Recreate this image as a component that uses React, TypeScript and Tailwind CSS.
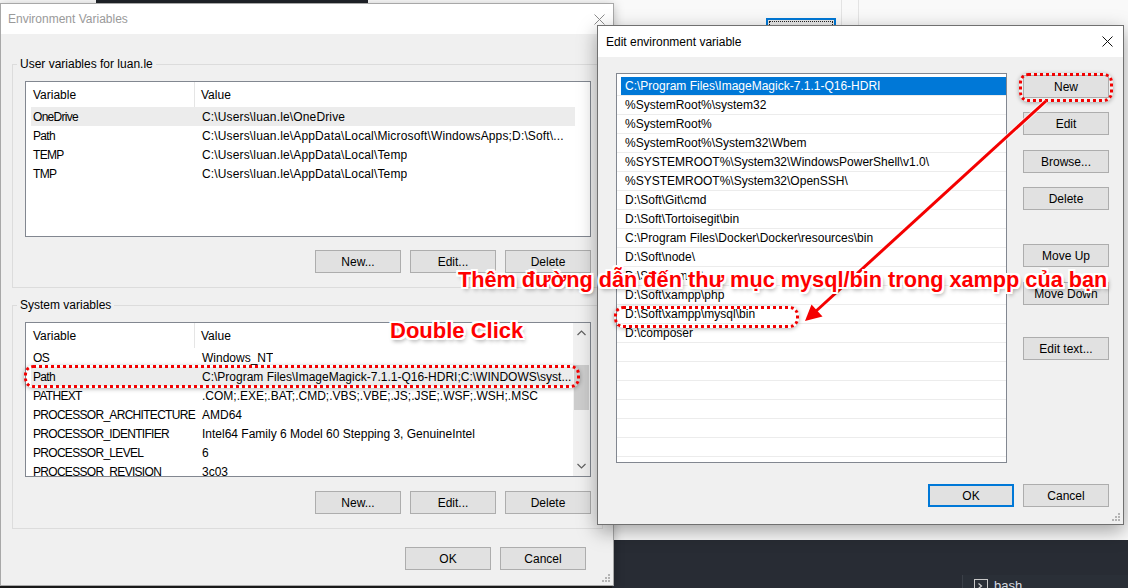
import React from "react";

const F = "font-['Liberation_Sans',Arial,sans-serif]";

function Btn({ children, primary = false }: { children: React.ReactNode; primary?: boolean }) {
  return (
    <div
      className={
        primary
          ? "h-[23px] w-[86px] shrink-0 flex items-center justify-center bg-[#e1e1e1] border-2 border-[#0078d7] text-[12px] leading-none text-black"
          : "h-[23px] w-[86px] shrink-0 flex items-center justify-center bg-[#e1e1e1] border border-[#adadad] text-[12px] leading-none text-black"
      }
    >
      {children}
    </div>
  );
}

function CloseX({ color }: { color: string }) {
  return (
    <svg width="11" height="11" viewBox="0 0 11 11" className="shrink-0">
      <path d="M0.5 0.5L10.5 10.5M10.5 0.5L0.5 10.5" stroke={color} strokeWidth="1" />
    </svg>
  );
}

function Grip() {
  return (
    <svg width="8" height="8" viewBox="0 0 8 8" fill="#b4b4b4">
      <rect x="6" y="0" width="2" height="2" />
      <rect x="3" y="3" width="2" height="2" />
      <rect x="6" y="3" width="2" height="2" />
      <rect x="0" y="6" width="2" height="2" />
      <rect x="3" y="6" width="2" height="2" />
      <rect x="6" y="6" width="2" height="2" />
    </svg>
  );
}

function Scrollbar() {
  return (
    <div className="w-[17px] h-full shrink-0 bg-[#f0f0f0] flex flex-col items-center">
      <div className="h-[20px] w-full flex items-center justify-center">
        <svg width="9" height="6" viewBox="0 0 9 6">
          <path d="M0.5 5L4.5 1L8.5 5" stroke="#606060" strokeWidth="1.2" fill="none" />
        </svg>
      </div>
      <div className="h-[22px]" />
      <div className="w-[15px] h-[45px] bg-[#cdcdcd]" />
      <div className="flex-1" />
      <div className="h-[20px] w-full flex items-center justify-center">
        <svg width="9" height="6" viewBox="0 0 9 6">
          <path d="M0.5 1L4.5 5L8.5 1" stroke="#606060" strokeWidth="1.2" fill="none" />
        </svg>
      </div>
    </div>
  );
}

function VarList({
  rows,
  sel,
  scroll,
  className,
}: {
  rows: [string, string][];
  sel: number;
  scroll: boolean;
  className: string;
}) {
  return (
    <div className={`flex bg-white border border-[#828790] overflow-hidden ${className}`}>
      <div className="flex-1 min-w-0 pl-[5px] overflow-hidden">
        <div className="flex h-[25px] w-[544px] items-stretch text-[12px] text-black">
          <div className="w-[164px] shrink-0 flex items-center pl-[2px] border-r border-[#e5e5e5]">Variable</div>
          <div className="flex items-center pl-[6px]">Value</div>
        </div>
        {rows.map(([a, b], i) => (
          <div
            key={i}
            className={
              i === sel
                ? "flex h-[19px] w-[544px] items-center text-[12px] text-black whitespace-nowrap bg-[#ececec]"
                : "flex h-[19px] w-[544px] items-center text-[12px] text-black whitespace-nowrap"
            }
          >
            <div className="w-[165px] shrink-0 pl-[2px] overflow-hidden tracking-[-0.7px]">{a}</div>
            <div className={scroll ? "pl-[6px] overflow-hidden" : "pl-[6px] overflow-hidden tracking-[0.15px]"}>{b}</div>
          </div>
        ))}
      </div>
      {scroll && <Scrollbar />}
    </div>
  );
}

const userRows: [string, string][] = [
  ["OneDrive", "C:\\Users\\luan.le\\OneDrive"],
  ["Path", "C:\\Users\\luan.le\\AppData\\Local\\Microsoft\\WindowsApps;D:\\Soft\\..."],
  ["TEMP", "C:\\Users\\luan.le\\AppData\\Local\\Temp"],
  ["TMP", "C:\\Users\\luan.le\\AppData\\Local\\Temp"],
];

const sysRows: [string, string][] = [
  ["OS", "Windows_NT"],
  ["Path", "C:\\Program Files\\ImageMagick-7.1.1-Q16-HDRI;C:\\WINDOWS\\syst..."],
  ["PATHEXT", ".COM;.EXE;.BAT;.CMD;.VBS;.VBE;.JS;.JSE;.WSF;.WSH;.MSC"],
  ["PROCESSOR_ARCHITECTURE", "AMD64"],
  ["PROCESSOR_IDENTIFIER", "Intel64 Family 6 Model 60 Stepping 3, GenuineIntel"],
  ["PROCESSOR_LEVEL", "6"],
  ["PROCESSOR_REVISION", "3c03"],
];

const paths: string[] = [
  "C:\\Program Files\\ImageMagick-7.1.1-Q16-HDRI",
  "%SystemRoot%\\system32",
  "%SystemRoot%",
  "%SystemRoot%\\System32\\Wbem",
  "%SYSTEMROOT%\\System32\\WindowsPowerShell\\v1.0\\",
  "%SYSTEMROOT%\\System32\\OpenSSH\\",
  "D:\\Soft\\Git\\cmd",
  "D:\\Soft\\Tortoisegit\\bin",
  "C:\\Program Files\\Docker\\Docker\\resources\\bin",
  "D:\\Soft\\node\\",
  "D:\\Soft\\xampp\\",
  "D:\\Soft\\xampp\\php",
  "D:\\Soft\\xampp\\mysql\\bin",
  "D:\\composer",
  "",
  "",
  "",
  "",
  "",
  "",
  "",
];

const annot =
  "font-['Liberation_Sans',Arial,sans-serif] font-bold text-[#fe0000] whitespace-nowrap leading-[22px] [text-shadow:-2px_-2px_0_#fff,2px_-2px_0_#fff,-2px_2px_0_#fff,2px_2px_0_#fff,0_-2px_0_#fff,0_2px_0_#fff,-2px_0_0_#fff,2px_0_0_#fff,2px_3px_4px_rgba(0,0,0,0.45)]";

export default function App() {
  return (
    <div className={`relative w-[1128px] h-[588px] overflow-hidden bg-[#f9f9f9] ${F}`}>
      {/* desktop background bits */}
      <div className="absolute left-[96px] top-0 w-[272px] h-[4px] bg-[#1f2329]" />
      <div className="absolute left-[841px] top-0 w-px h-[30px] bg-[#e3e3e3]" />
      <div className="absolute left-[858px] top-0 w-px h-[30px] bg-[#e3e3e3]" />
      <div className="absolute left-[766px] top-[18px] w-[70px] h-[12px] border-2 border-[#0078d7] bg-[#e8e8e8] p-px">
        <div className="h-full border border-dotted border-[#222]" />
      </div>
      <div className="absolute left-0 top-[584px] w-[620px] h-[4px] bg-[#1e1e1e]" />
      <div className="absolute left-[612px] top-[540px] w-[516px] h-[48px] bg-[#282c34]">
        <div className="flex pt-[35px] pl-[350px] h-full">
          <div className="border-l border-[#3b4048] pl-[11px] flex items-start gap-[6px] flex-1 bg-[#2a2f37]">
            <div className="mt-[4px] w-[14px] h-[14px] border border-[#c8c8c8] flex items-center justify-center">
              <svg width="8" height="8" viewBox="0 0 8 8">
                <path d="M1.5 1.5L4.5 4L1.5 6.5" stroke="#d0d0d0" strokeWidth="1.2" fill="none" />
              </svg>
            </div>
            <span className="text-[13px] leading-[16px] mt-[3px] text-[#d7dae0]">bash</span>
          </div>
        </div>
      </div>

      {/* Environment Variables window */}
      <div className="absolute left-0 top-[3px] w-[614px] h-[583px] flex flex-col bg-[#f0f0f0] border border-[#a8a8a8] shadow-[0_2px_10px_rgba(0,0,0,0.25)]">
        <div className="h-[30px] shrink-0 bg-white flex items-center justify-between pl-[7px] pr-[8px]">
          <span className="text-[12px] text-[#9a9a9a]">Environment Variables</span>
          <CloseX color="#8c8c8c" />
        </div>
        <div className="pl-[11px] pt-[23px]">
          <fieldset className="w-[591px] border border-[#dcdcdc] pb-[14px]">
            <legend className="ml-[4px] px-[3px] text-[12px] leading-[15px] text-black">User variables for luan.le</legend>
            <div className="pl-[12px] pr-[11px]">
              <VarList rows={userRows} sel={0} scroll={false} className="mt-[9px] w-[566px] h-[156px]" />
              <div className="mt-[13px] flex justify-end gap-[9px]">
                <Btn>New...</Btn>
                <Btn>Edit...</Btn>
                <Btn>Delete</Btn>
              </div>
            </div>
          </fieldset>
          <fieldset className="mt-[10px] w-[591px] border border-[#dcdcdc] pb-[14px]">
            <legend className="ml-[4px] px-[3px] text-[12px] leading-[15px] text-black">System variables</legend>
            <div className="pl-[12px] pr-[11px]">
              <VarList rows={sysRows} sel={1} scroll={true} className="mt-[9px] w-[566px] h-[155px]" />
              <div className="mt-[14px] flex justify-end gap-[9px]">
                <Btn>New...</Btn>
                <Btn>Edit...</Btn>
                <Btn>Delete</Btn>
              </div>
            </div>
          </fieldset>
          <div className="mt-[18px] flex justify-end gap-[9px] pr-[27px]">
            <Btn>OK</Btn>
            <Btn>Cancel</Btn>
          </div>
        </div>
        <div className="absolute right-[3px] bottom-[3px]">
          <Grip />
        </div>
      </div>

      {/* Edit environment variable window */}
      <div className="absolute left-[597px] top-[25px] w-[527px] h-[500px] flex flex-col bg-[#f0f0f0] border border-[#707070] shadow-[0_6px_18px_rgba(0,0,0,0.35)]">
        <div className="h-[31px] shrink-0 bg-white flex items-center justify-between pl-[8px] pr-[10px]">
          <span className="text-[12px] text-black">Edit environment variable</span>
          <CloseX color="#111" />
        </div>
        <div className="flex pl-[18px] pt-[16px]">
          <div className="w-[391px] h-[390px] shrink-0 bg-white border border-[#828790] pt-[3px] overflow-hidden">
            {paths.map((p, i) => (
              <div key={i} className="h-[19px] border-b border-[#ececec] flex">
                <div
                  className={
                    i === 0
                      ? "ml-[4px] flex-1 pl-[4px] flex items-center text-[12px] whitespace-nowrap bg-[#0078d7] text-white"
                      : "ml-[4px] flex-1 pl-[4px] flex items-center text-[12px] whitespace-nowrap text-black"
                  }
                >
                  {p}
                </div>
              </div>
            ))}
          </div>
          <div className="ml-[16px] flex flex-col">
            <div className="mt-[2px]"><Btn>New</Btn></div>
            <div className="mt-[14px]"><Btn>Edit</Btn></div>
            <div className="mt-[15px]"><Btn>Browse...</Btn></div>
            <div className="mt-[14px]"><Btn>Delete</Btn></div>
            <div className="mt-[34px]"><Btn>Move Up</Btn></div>
            <div className="mt-[15px]"><Btn>Move Down</Btn></div>
            <div className="mt-[32px]"><Btn>Edit text...</Btn></div>
          </div>
        </div>
        <div className="mt-[21px] flex justify-end gap-[9px] pr-[14px]">
          <Btn primary>OK</Btn>
          <Btn>Cancel</Btn>
        </div>
        <div className="absolute right-[3px] bottom-[3px]">
          <Grip />
        </div>
      </div>

      {/* annotations */}
      <div className="absolute left-[24px] top-[365px] w-[556px] h-[23px] rounded-[9px] border-[3px] border-dotted border-[#f20000] shadow-[0_1px_4px_rgba(0,0,0,0.3)]" />
      <div className="absolute left-[614px] top-[306px] w-[185px] h-[22px] rounded-[9px] border-[3px] border-dotted border-[#f20000] shadow-[0_1px_4px_rgba(0,0,0,0.3)]" />
      <div className="absolute left-[1019px] top-[73px] w-[94px] h-[29px] rounded-[9px] border-[3px] border-dotted border-[#f20000] shadow-[0_1px_4px_rgba(0,0,0,0.3)]" />

      <svg className="absolute left-0 top-0 pointer-events-none" width="1128" height="588" viewBox="0 0 1128 588">
        <line x1="1046" y1="101" x2="815" y2="312" stroke="#ffffff" strokeWidth="5" strokeOpacity="0.7" />
        <line x1="1046" y1="101" x2="815" y2="312" stroke="#f40000" strokeWidth="3" />
        <polygon points="805,321 822.5,316.5 811.5,304.5" fill="#f40000" />
      </svg>

      <div className={`absolute left-[390px] top-[320px] text-[22px] ${annot}`}>Double Click</div>
      <div className={`absolute left-[458px] top-[269px] text-[21.7px] ${annot}`}>
        Thêm đường dẫn đến thư mục mysql/bin trong xampp của bạn
      </div>
    </div>
  );
}
